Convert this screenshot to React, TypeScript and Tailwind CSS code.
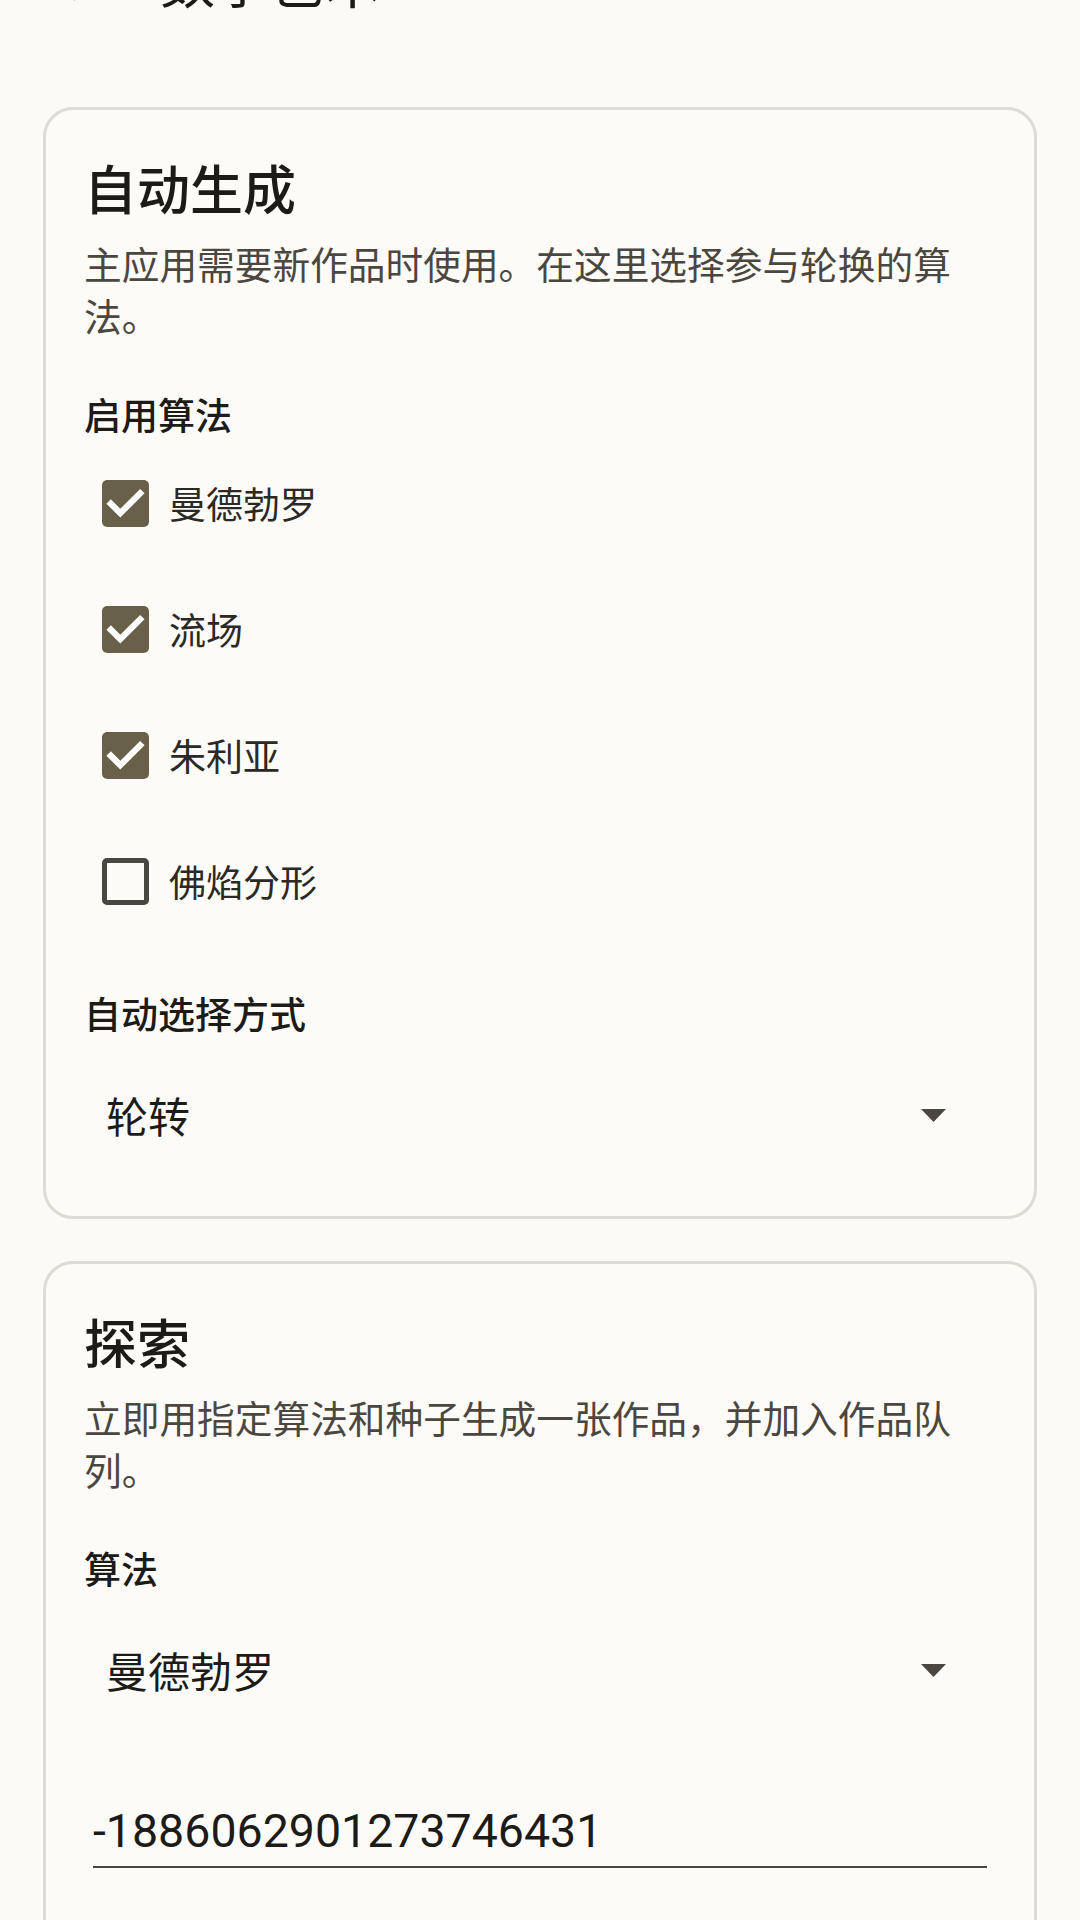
import React from "react"

const cjk = { fontFamily: '"Noto Sans CJK SC", "Noto Sans", sans-serif' }

function CheckRow({ label, checked }: { label: string; checked: boolean }) {
  return (
    <div className="flex h-[126px] items-center pl-[18px]">
      {checked ? (
        <svg viewBox="3 3 18 18" className="h-[47px] w-[47px] shrink-0">
          <path
            d="M19 3H5c-1.11 0-2 .9-2 2v14c0 1.1.89 2 2 2h14c1.11 0 2-.9 2-2V5c0-1.1-.89-2-2-2z"
            fill="#686049"
          />
          <path d="M10 17.4l-5.3-5.3 1.7-1.7 3.6 3.6 7.6-7.6 1.7 1.7z" fill="#ffffff" />
        </svg>
      ) : (
        <div className="h-[47px] w-[47px] shrink-0 rounded-[5px] border-[5px] border-[#4a4740]" />
      )}
      <span className="ml-[20px] text-[37px] leading-[48px] text-[#2b2925]">{label}</span>
    </div>
  )
}

function Dropdown({ value }: { value: string }) {
  return (
    <div className="flex h-[100px] items-center justify-between pl-[22px] pr-[50px]">
      <span className="text-[42px] leading-[52px] text-[#1d1b17]">{value}</span>
      <svg viewBox="0 0 25 13" className="h-[13px] w-[25px]">
        <path d="M0 0h25L12.5 13z" fill="#4a4740" />
      </svg>
    </div>
  )
}

function Card({ children }: { children: React.ReactNode }) {
  return (
    <div className="rounded-[30px] border-[3px] border-[#dedbd5] bg-[#fdfbf7] px-[38px] pt-[45px]">
      {children}
    </div>
  )
}

export default function App() {
  return (
    <div className="min-h-[1920px] overflow-hidden bg-[#fcfaf5] px-[43px]" style={cjk}>
      {/* Top bar, mostly scrolled out */}
      <div className="-mt-[52px] flex h-[63px] items-center">
        <svg viewBox="0 0 24 24" className="h-[63px] w-[63px] shrink-0">
          <path d="M20 11H7.83l5.59-5.59L12 4l-8 8 8 8 1.41-1.41L7.83 13H20v-2z" fill="#1d1b17" />
        </svg>
        <span className="ml-[54px] text-[55px] leading-[63px] text-[#1d1b17]">数字艺术</span>
      </div>

      <div className="mt-[96px] flex flex-col gap-[42px]">
        <Card>
          <h2 className="text-[53px] font-medium leading-[64px] text-[#1d1b17]">自动生成</h2>
          <p className="mt-[18px] text-[37.7px] leading-[52px] text-[#4b4740]">
            主应用需要新作品时使用。在这里选择参与轮换的算法。
          </p>
          <div className="mt-[51px] text-[37px] font-medium leading-[44px] text-[#1d1b17]">启用算法</div>
          <div className="mt-[4px]">
            <CheckRow label="曼德勃罗" checked />
            <CheckRow label="流场" checked />
            <CheckRow label="朱利亚" checked />
            <CheckRow label="佛焰分形" checked={false} />
          </div>
          <div className="mt-[47px] text-[37px] font-medium leading-[44px] text-[#1d1b17]">自动选择方式</div>
          <div className="mt-[30px] pb-[51px]">
            <Dropdown value="轮转" />
          </div>
        </Card>

        <Card>
          <h2 className="text-[53px] font-medium leading-[64px] text-[#1d1b17]">探索</h2>
          <p className="mt-[18px] text-[37.7px] leading-[52px] text-[#4b4740]">
            立即用指定算法和种子生成一张作品，并加入作品队列。
          </p>
          <div className="mt-[51px] text-[37px] font-medium leading-[44px] text-[#1d1b17]">算法</div>
          <div className="mt-[30px]">
            <Dropdown value="曼德勃罗" />
          </div>
          <div className="mx-[9px] mt-[83px] border-b-2 border-[#4a4740] pb-[7px]">
            <span
              className="text-[46.5px] leading-[56px] text-[#1d1b17]"
              style={{ fontFamily: "Roboto, sans-serif" }}
            >
              -1886062901273746431
            </span>
          </div>
          <div className="h-[200px]" />
        </Card>
      </div>
    </div>
  )
}
